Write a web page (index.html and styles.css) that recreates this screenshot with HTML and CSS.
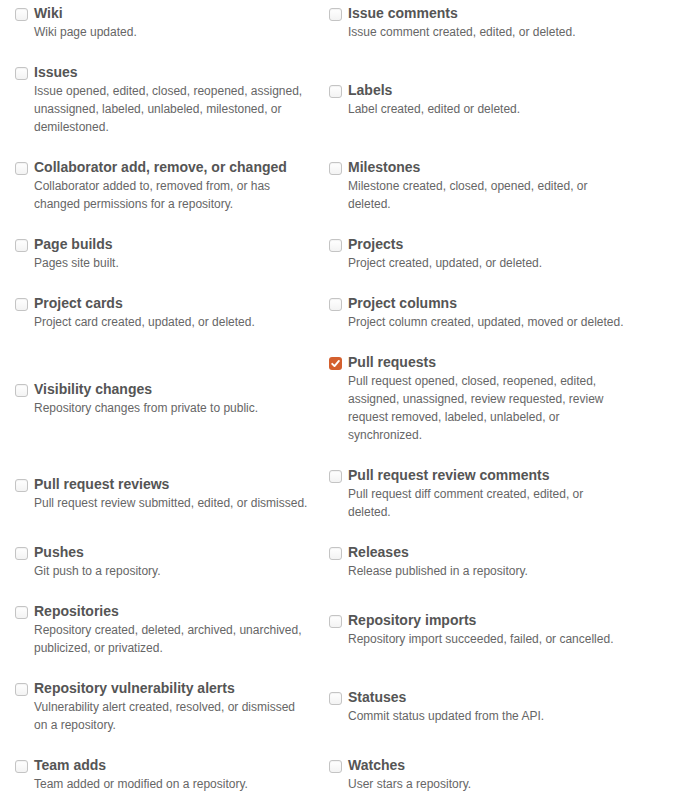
FILE: index.html
```html
<!DOCTYPE html>
<html>
<head>
<meta charset="utf-8">
<link rel="stylesheet" href="styles.css">
</head>
<body>
<div class="events">
  <label class="event"><span class="box"></span><span class="text"><span class="title">Wiki</span><span class="desc">Wiki page updated.</span></span></label>
  <label class="event"><span class="box"></span><span class="text"><span class="title">Issue comments</span><span class="desc">Issue comment created, edited, or deleted.</span></span></label>

  <label class="event"><span class="box"></span><span class="text"><span class="title">Issues</span><span class="desc">Issue opened, edited, closed, reopened, assigned, unassigned, labeled, unlabeled, milestoned, or demilestoned.</span></span></label>
  <label class="event"><span class="box"></span><span class="text"><span class="title">Labels</span><span class="desc">Label created, edited or deleted.</span></span></label>

  <label class="event"><span class="box"></span><span class="text"><span class="title">Collaborator add, remove, or changed</span><span class="desc">Collaborator added to, removed from, or has changed permissions for a repository.</span></span></label>
  <label class="event"><span class="box"></span><span class="text"><span class="title">Milestones</span><span class="desc">Milestone created, closed, opened, edited, or deleted.</span></span></label>

  <label class="event"><span class="box"></span><span class="text"><span class="title">Page builds</span><span class="desc">Pages site built.</span></span></label>
  <label class="event"><span class="box"></span><span class="text"><span class="title">Projects</span><span class="desc">Project created, updated, or deleted.</span></span></label>

  <label class="event"><span class="box"></span><span class="text"><span class="title">Project cards</span><span class="desc">Project card created, updated, or deleted.</span></span></label>
  <label class="event"><span class="box"></span><span class="text"><span class="title">Project columns</span><span class="desc">Project column created, updated, moved or deleted.</span></span></label>

  <label class="event"><span class="box"></span><span class="text"><span class="title">Visibility changes</span><span class="desc">Repository changes from private to public.</span></span></label>
  <label class="event"><span class="box checked"><svg viewBox="0 0 13 13" width="13" height="13"><path d="M3.2 6.8 L5.5 9.1 L9.9 3.9" fill="none" stroke="#fff" stroke-width="1.9" stroke-linecap="round" stroke-linejoin="round"/></svg></span><span class="text"><span class="title">Pull requests</span><span class="desc">Pull request opened, closed, reopened, edited, assigned, unassigned, review requested, review request removed, labeled, unlabeled, or synchronized.</span></span></label>

  <label class="event"><span class="box"></span><span class="text"><span class="title">Pull request reviews</span><span class="desc">Pull request review submitted, edited, or dismissed.</span></span></label>
  <label class="event"><span class="box"></span><span class="text"><span class="title">Pull request review comments</span><span class="desc">Pull request diff comment created, edited, or deleted.</span></span></label>

  <label class="event"><span class="box"></span><span class="text"><span class="title">Pushes</span><span class="desc">Git push to a repository.</span></span></label>
  <label class="event"><span class="box"></span><span class="text"><span class="title">Releases</span><span class="desc">Release published in a repository.</span></span></label>

  <label class="event"><span class="box"></span><span class="text"><span class="title">Repositories</span><span class="desc">Repository created, deleted, archived, unarchived, publicized, or privatized.</span></span></label>
  <label class="event"><span class="box"></span><span class="text"><span class="title">Repository imports</span><span class="desc">Repository import succeeded, failed, or cancelled.</span></span></label>

  <label class="event"><span class="box"></span><span class="text"><span class="title">Repository vulnerability alerts</span><span class="desc">Vulnerability alert created, resolved, or dismissed on a repository.</span></span></label>
  <label class="event"><span class="box"></span><span class="text"><span class="title">Statuses</span><span class="desc">Commit status updated from the API.</span></span></label>

  <label class="event"><span class="box"></span><span class="text"><span class="title">Team adds</span><span class="desc">Team added or modified on a repository.</span></span></label>
  <label class="event"><span class="box"></span><span class="text"><span class="title">Watches</span><span class="desc">User stars a repository.</span></span></label>
</div>
</body>
</html>
```
FILE: styles.css
```css
html, body {
  margin: 0;
  padding: 0;
  background: #fff;
}
body {
  font-family: "Liberation Sans", Arial, sans-serif;
}
.events {
  display: grid;
  grid-template-columns: 314px 314px;
  row-gap: 21px;
  align-items: center;
  padding: 3px 0 0 14px;
}
.event {
  display: flex;
  align-items: flex-start;
}
.box {
  flex: none;
  width: 11px;
  height: 11px;
  margin: 5px 6px 0 1px;
  border: 1px solid #c4c4c4;
  border-radius: 3px;
  background: linear-gradient(#fff, #f3f3f3);
  box-shadow: inset 0 1px 1px rgba(0,0,0,0.05);
}
.box.checked {
  width: 13px;
  height: 13px;
  border: none;
  background: #d4602e;
  box-shadow: none;
}
.box.checked svg {
  display: block;
}
.text {
  display: flex;
  flex-direction: column;
  width: 276px;
}
.title {
  font-size: 14px;
  font-weight: bold;
  line-height: 20px;
  color: #555;
}
.desc {
  font-size: 12px;
  line-height: 18px;
  color: #666;
}
```
